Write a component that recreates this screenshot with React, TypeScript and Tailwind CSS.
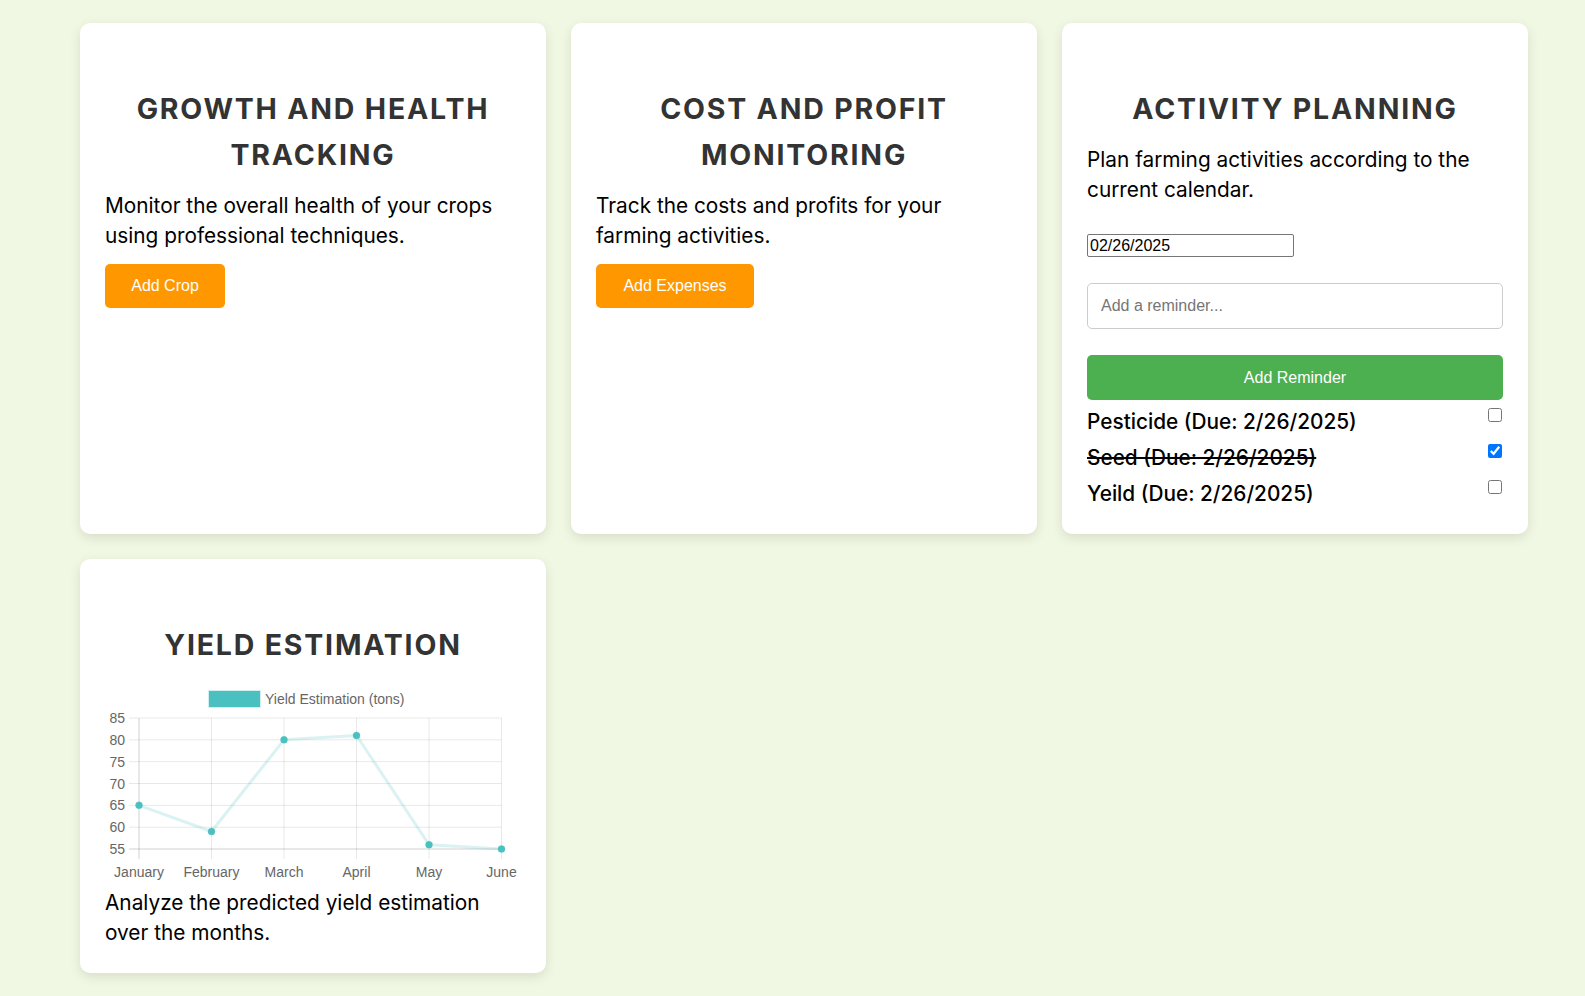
import React from 'react';

const months = ['January', 'February', 'March', 'April', 'May', 'June'];
const values = [65, 59, 80, 81, 56, 55];
const ticks = [85, 80, 75, 70, 65, 60, 55];

const xAt = (i: number) => 34 + i * 72.5;
const yAt = (v: number) => 181 - (v - 55) * (131 / 30);

function YieldChart() {
    const pts = values.map((v, i) => `${xAt(i)},${yAt(v)}`).join(' ');
    return (
        <svg width="416" height="220" viewBox="0 0 416 220" className="block">
            <rect x="104" y="23" width="51" height="16" fill="#4bc0c0" stroke="rgba(75,192,192,0.25)" strokeWidth="2" />
            <text x="160" y="36" fontSize="14" fill="#666" fontFamily="Liberation Sans, Arial, sans-serif">Yield Estimation (tons)</text>
            {ticks.map((t) => (
                <g key={t}>
                    <line x1="24" x2="396.5" y1={yAt(t)} y2={yAt(t)} stroke={t === 55 ? 'rgba(0,0,0,0.18)' : 'rgba(0,0,0,0.09)'} strokeWidth="1" />
                    <text x="20" y={yAt(t) + 5} fontSize="14" fill="#666" textAnchor="end" fontFamily="Liberation Sans, Arial, sans-serif">{t}</text>
                </g>
            ))}
            {months.map((m, i) => (
                <g key={m}>
                    <line x1={xAt(i)} x2={xAt(i)} y1="50" y2="191" stroke={i === 0 ? 'rgba(0,0,0,0.18)' : 'rgba(0,0,0,0.09)'} strokeWidth="1" />
                    <text x={xAt(i)} y="209" fontSize="14" fill="#666" textAnchor="middle" fontFamily="Liberation Sans, Arial, sans-serif">{m}</text>
                </g>
            ))}
            <polyline points={pts} fill="none" stroke="rgba(75,192,192,0.2)" strokeWidth="3" strokeLinejoin="round" />
            {values.map((v, i) => (
                <circle key={i} cx={xAt(i)} cy={yAt(v)} r="3.5" fill="#4bc0c0" stroke="rgba(75,192,192,0.3)" strokeWidth="1" />
            ))}
        </svg>
    );
}

function Card({ title, children }: { title: React.ReactNode; children: React.ReactNode }) {
    return (
        <div className="bg-white rounded-[10px] shadow-[0_4px_12px_rgba(0,0,0,0.1)] px-[25px] pt-[63px] pb-[22px]">
            <h2 className="text-center text-[28.5px] leading-[46px] font-bold tracking-[1.8px] text-[#333]">{title}</h2>
            {children}
        </div>
    );
}

const reminders = [
    { text: 'Pesticide (Due: 2/26/2025)', done: false },
    { text: 'Seed (Due: 2/26/2025)', done: true },
    { text: 'Yeild (Due: 2/26/2025)', done: false },
];

export default function App() {
    return (
        <div className="min-h-screen bg-[#f0f7e2] pl-[80px] pt-[23px] pb-[25px] font-['Inter','Noto_Sans',sans-serif] text-black">
            <div className="grid grid-cols-[466px_466px_466px] gap-x-[25px] gap-y-[25px]">
                <Card title="GROWTH AND HEALTH TRACKING">
                    <p className="mt-[13px] text-[20.8px] leading-[30px]">Monitor the overall health of your crops using professional techniques.</p>
                    <button className="mt-[13px] h-[44px] w-[120px] rounded-[5px] bg-[#ff9800] text-white text-[16px] font-['Liberation_Sans',Arial,sans-serif]">Add Crop</button>
                </Card>
                <Card title="COST AND PROFIT MONITORING">
                    <p className="mt-[13px] text-[20.8px] leading-[30px]">Track the costs and profits for your farming activities.</p>
                    <button className="mt-[13px] h-[44px] w-[158px] rounded-[5px] bg-[#ff9800] text-white text-[16px] font-['Liberation_Sans',Arial,sans-serif]">Add Expenses</button>
                </Card>
                <Card title="ACTIVITY PLANNING">
                    <p className="mt-[13px] text-[20.8px] leading-[30px]">Plan farming activities according to the current calendar.</p>
                    <input
                        type="text"
                        readOnly
                        defaultValue="02/26/2025"
                        className="mt-[29px] block h-[23px] w-[207px] border border-[#767676] rounded-[2px] px-[2px] text-[16px] text-black font-['Liberation_Sans',Arial,sans-serif] outline-none"
                    />
                    <input
                        type="text"
                        placeholder="Add a reminder..."
                        className="mt-[26px] block h-[46px] w-full border border-[#ccc] rounded-[5px] px-[13px] text-[16px] font-['Liberation_Sans',Arial,sans-serif] placeholder:text-[#757575] outline-none"
                    />
                    <button className="mt-[26px] block h-[45px] w-full rounded-[5px] bg-[#4caf50] text-white text-[16px] font-['Liberation_Sans',Arial,sans-serif]">Add Reminder</button>
                    <ul className="mt-[4px]">
                        {reminders.map((r) => (
                            <li key={r.text} className="flex items-start justify-between py-[3px]">
                                <span className={`text-[20.8px] leading-[30px] font-medium ${r.done ? 'line-through' : ''}`}>{r.text}</span>
                                <input type="checkbox" defaultChecked={r.done} className="mt-[1px] mr-[1px] w-[14px] h-[14px]" />
                            </li>
                        ))}
                    </ul>
                </Card>
                <div className="bg-white rounded-[10px] shadow-[0_4px_12px_rgba(0,0,0,0.1)] px-[25px] pt-[63px] pb-[25px]">
                    <h2 className="text-center text-[28.5px] leading-[46px] font-bold tracking-[1.8px] text-[#333]">YIELD ESTIMATION</h2>
                    <YieldChart />
                    <p className="text-[20.8px] leading-[30px]">Analyze the predicted yield estimation over the months.</p>
                </div>
            </div>
        </div>
    );
}
